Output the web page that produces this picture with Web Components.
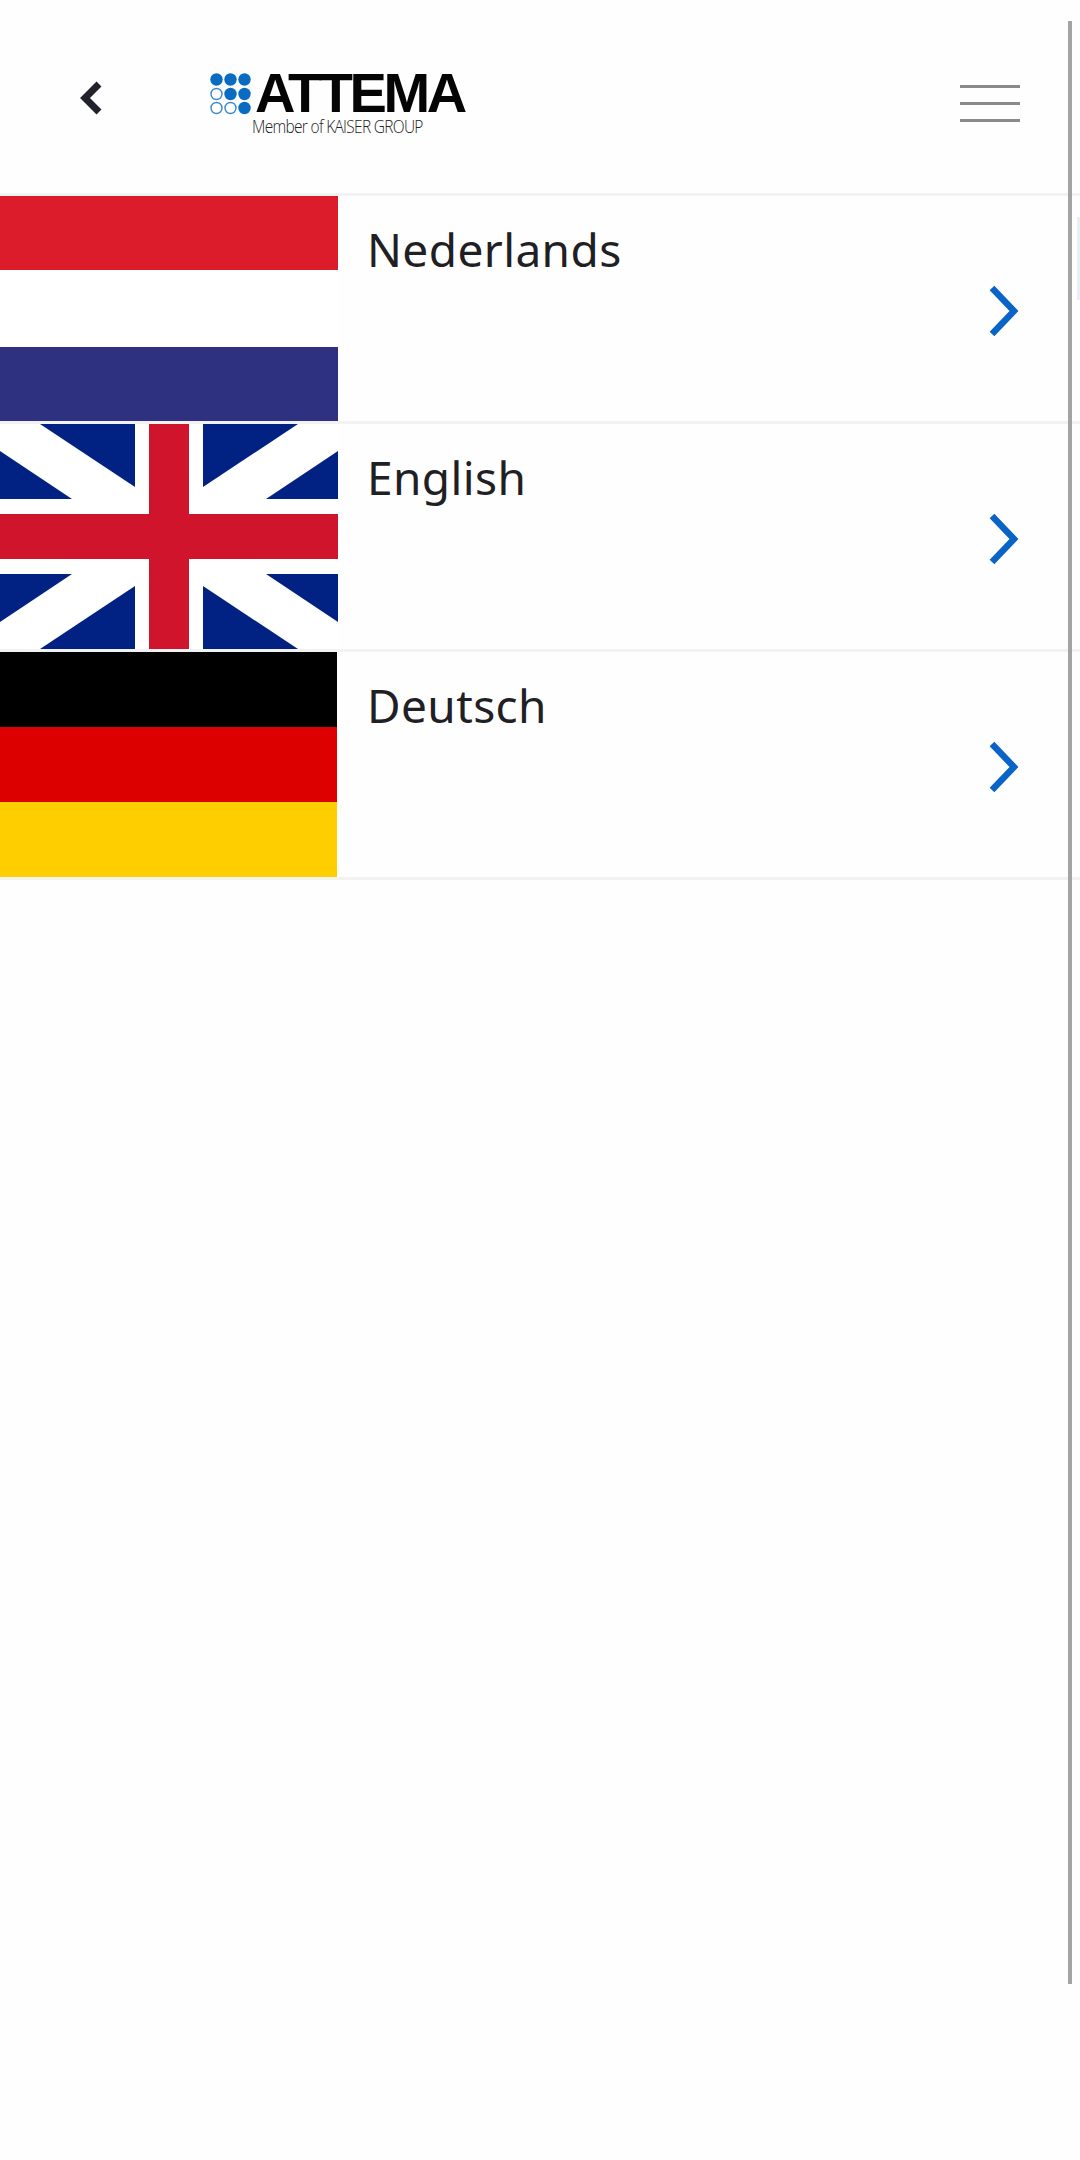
<!DOCTYPE html>
<html lang="nl">
<head>
<meta charset="utf-8">
<title>Attema</title>
<style>
  html, body { margin: 0; background: #fefefe; }
  body { min-height: 2160px; font-family: "Noto Sans", sans-serif; }
</style>
</head>
<body>
<app-header></app-header>
<language-list>
  <language-row flag="nl">Nederlands</language-row>
  <language-row flag="en">English</language-row>
  <language-row flag="de">Deutsch</language-row>
</language-list>
<page-scrollbar></page-scrollbar>

<script>
class AppHeader extends HTMLElement {
    constructor() {
        super();
        this.shadowDOM = this.attachShadow({ mode: "open" });
    }

    connectedCallback() {
        this.shadowDOM.innerHTML = `
        <style>
        :host {
            display: flex;
            align-items: flex-start;
            height: 193px;
            border-bottom: 3px solid #f2f2f2;
            box-sizing: content-box;
        }
        .back {
            display: block;
            flex: none;
            margin: 78px 0 0 78px;
            width: 30px;
            height: 40px;
        }
        .logo {
            display: flex;
            margin: 73px 0 0 102px;
        }
        .dots { display: block; width: 42px; height: 42px; margin-right: 3px; }
        .words { display: flex; flex-direction: column; }
        .name {
            font: bold 56px/40px "Liberation Sans", sans-serif;
            letter-spacing: -3.4px;
            color: #050505;
            height: 40px;
        }
        .member {
            font: 300 18px/20px "Open Sans", sans-serif;
            letter-spacing: -0.8px;
            color: #222;
            margin: 3px 0 0 -3px;
            white-space: nowrap;
            transform: scaleX(0.86);
            transform-origin: left top;
        }
        .menu {
            display: flex;
            flex-direction: column;
            gap: 14px;
            width: 60px;
            margin: 85px 60px 0 auto;
        }
        .menu span { display: block; height: 3px; background: #8a8a8a; }
        </style>
        <svg class="back" viewBox="0 0 30 40">
            <path d="M21 6 L7 20 L21 34" fill="none" stroke="#22222c" stroke-width="7"/>
        </svg>
        <div class="logo">
            <svg class="dots" viewBox="0 0 42 42">
                <g fill="#0a6cc0">
                    <circle cx="6.5" cy="6.5" r="6.2"/><circle cx="20.5" cy="6.5" r="6.2"/><circle cx="34.5" cy="6.5" r="6.2"/>
                    <circle cx="20.5" cy="21" r="6.2"/><circle cx="34.5" cy="21" r="6.2"/>
                    <circle cx="34.5" cy="35" r="6.2"/>
                </g>
                <g fill="none" stroke="#3d88c6" stroke-width="1.4">
                    <circle cx="6.5" cy="21" r="5.5"/>
                    <circle cx="6.5" cy="35" r="5.5"/><circle cx="20.5" cy="35" r="5.5"/>
                </g>
            </svg>
            <div class="words">
                <div class="name">ATTEMA</div>
                <div class="member">Member of KAISER GROUP</div>
            </div>
        </div>
        <div class="menu"><span></span><span></span><span></span></div>
        `;
    }
}

class LanguageList extends HTMLElement {
    constructor() {
        super();
        this.attachShadow({ mode: "open" }).innerHTML = `
        <style>
        :host { display: flex; flex-direction: column; }
        </style>
        <slot></slot>
        `;
    }
}

const FLAGS = {
    nl: `<svg viewBox="0 0 338 225" preserveAspectRatio="none">
            <rect width="338" height="225" fill="#fff"/>
            <rect width="338" height="74" fill="#dc1c2b"/>
            <rect y="151" width="338" height="74" fill="#2e3180"/>
        </svg>`,
    en: `<svg viewBox="0 0 338 225" preserveAspectRatio="none">
            <rect width="338" height="225" fill="#fff"/>
            <g fill="#012282">
                <path d="M40 0 H135 V63 Z"/>
                <path d="M203 0 H298 L203 63 Z"/>
                <path d="M0 27 L72 75 H0 Z"/>
                <path d="M338 27 V75 H266 Z"/>
                <path d="M0 198 L72 150 H0 Z"/>
                <path d="M338 198 V150 H266 Z"/>
                <path d="M40 225 H135 V162 Z"/>
                <path d="M203 225 H298 L203 162 Z"/>
            </g>
            <g fill="#cf142b">
                <rect x="149" width="40" height="225"/>
                <rect y="90" width="338" height="45"/>
            </g>
        </svg>`,
    de: `<svg viewBox="0 0 337 225" preserveAspectRatio="none">
            <rect width="337" height="75" fill="#000"/>
            <rect y="75" width="337" height="75" fill="#dd0000"/>
            <rect y="150" width="337" height="75" fill="#ffce00"/>
        </svg>`
};

class LanguageRow extends HTMLElement {
    constructor() {
        super();
        this.shadowDOM = this.attachShadow({ mode: "open" });
    }

    connectedCallback() {
        const flag = this.getAttribute("flag");
        this.shadowDOM.innerHTML = `
        <style>
        :host {
            display: flex;
            height: 225px;
            border-bottom: 3px solid #f2f2f2;
        }
        .flag { width: ${flag === "de" ? 337 : 338}px; flex: none; margin-right: ${flag === "de" ? 30 : 29}px; }
        .flag svg { display: block; width: 100%; height: 225px; }
        .label {
            flex: 1;
            font: 46px/64px "Noto Sans", sans-serif;
            letter-spacing: 0.4px;
            color: #1f2024;
            padding-top: 21px;
        }
        .arrow { display: block; width: 34px; height: 58px; margin: 86px 60px 0 0; flex: none; }
        </style>
        <div class="flag">${FLAGS[flag]}</div>
        <div class="label"><slot></slot></div>
        <svg class="arrow" viewBox="0 0 34 58">
            <path d="M6 6 L28 29 L6 52" fill="none" stroke="#0a64c8" stroke-width="6.5"/>
        </svg>
        `;
    }
}

class PageScrollbar extends HTMLElement {
    constructor() {
        super();
        this.attachShadow({ mode: "open" }).innerHTML = `
        <style>
        :host {
            position: absolute;
            left: 1068px;
            top: 21px;
            width: 4px;
            height: 1963px;
            background: #a3a3a3;
        }
        .thumb {
            position: absolute;
            left: 9px;
            top: 196px;
            width: 3px;
            height: 83px;
            background: #e9eef4;
        }
        </style>
        <div class="thumb"></div>
        `;
    }
}

customElements.define("app-header", AppHeader);
customElements.define("language-list", LanguageList);
customElements.define("language-row", LanguageRow);
customElements.define("page-scrollbar", PageScrollbar);
</script>
</body>
</html>
